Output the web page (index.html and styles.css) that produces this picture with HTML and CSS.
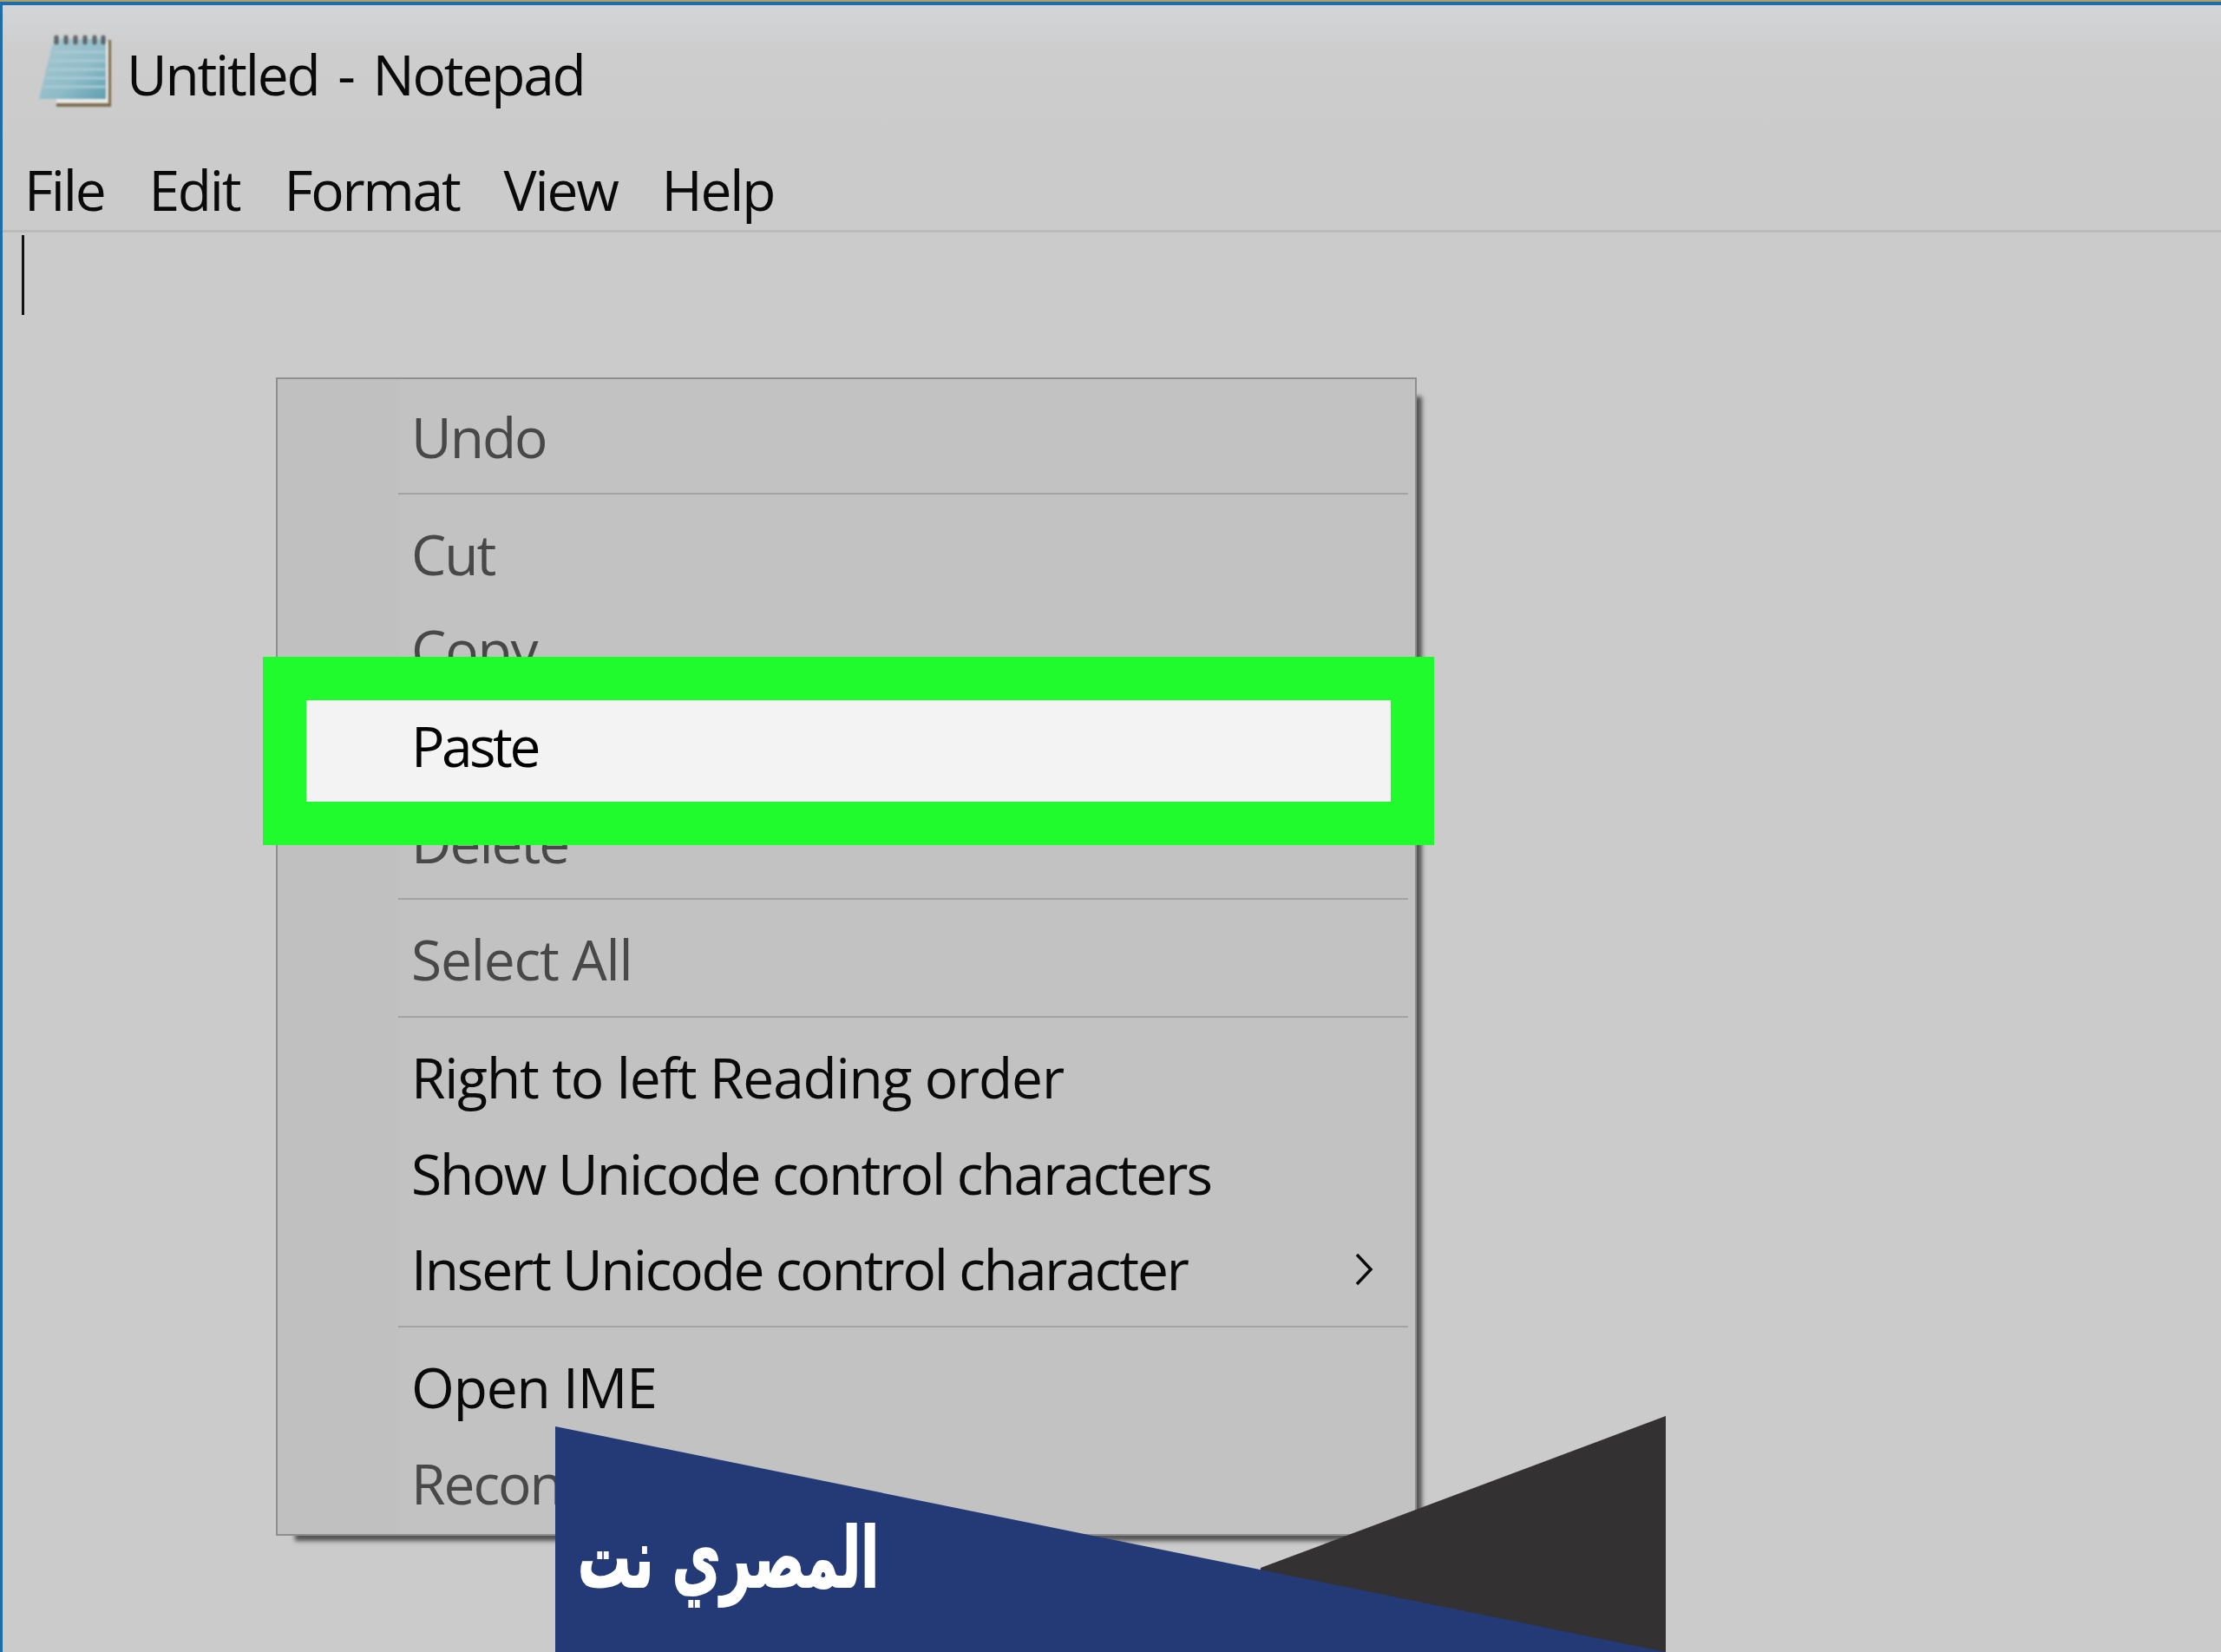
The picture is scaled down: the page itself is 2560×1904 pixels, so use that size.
FILE: index.html
```html
<!DOCTYPE html>
<html lang="en">
<head>
<meta charset="utf-8">
<title>Untitled - Notepad</title>
<link rel="stylesheet" href="styles.css">
</head>
<body>
<div class="window">
  <header class="titlebar">
    <svg class="app-icon" width="84" height="88" viewBox="0 0 84 88" aria-hidden="true">
      <defs>
        <linearGradient id="page" x1="0" y1="0" x2="1" y2="1">
          <stop offset="0" stop-color="#a9c8d2"/>
          <stop offset="0.6" stop-color="#8fbcc8"/>
          <stop offset="1" stop-color="#5f9fb0"/>
        </linearGradient>
      </defs>
      <path d="M20 10H82V85H20Z" fill="#e9e9e6"/>
      <path d="M80 8H83V85H20V81H80Z" fill="#7d6a4c"/>
      <path d="M17 7H77V76H0Q9 40 17 7Z" fill="url(#page)"/>
      <path d="M17 22H76M14 32H76M11 42H76M8 52H76M5 62H76" stroke="#a6cad3" stroke-width="3" fill="none"/>
      <path d="M20 5v6M31 5v6M42 5v6M53 5v6M64 5v6M74 5v6" stroke="#5d6468" stroke-width="5" stroke-linecap="round"/>
    </svg>
    <h1 class="title">Untitled - Notepad</h1>
  </header>
  <nav class="menubar">
    <span class="menu-label">File</span>
    <span class="menu-label">Edit</span>
    <span class="menu-label">Format</span>
    <span class="menu-label">View</span>
    <span class="menu-label">Help</span>
  </nav>
  <main class="editor"><span class="caret"></span></main>
</div>

<div class="context-menu">
  <div class="item off"><span>Undo</span></div>
  <div class="sep first"></div>
  <div class="item off"><span>Cut</span></div>
  <div class="item off loose"><span>Copy</span></div>
  <div class="item hot tight"><span>Paste</span></div>
  <div class="item off"><span>Delete</span></div>
  <div class="sep"></div>
  <div class="item off loose"><span>Select All</span></div>
  <div class="sep"></div>
  <div class="item loose"><span>Right to left Reading order</span></div>
  <div class="item"><span>Show Unicode control characters</span></div>
  <div class="item"><span class="snug">Insert Unicode control character</span>
    <svg class="chevron" width="22" height="38" viewBox="0 0 22 38" aria-hidden="true"><path d="M3 2L19 19L3 36" fill="none" stroke="#0a0a0a" stroke-width="3.5"/></svg>
  </div>
  <div class="sep"></div>
  <div class="item loose"><span>Open IME</span></div>
  <div class="item off"><span>Reconversion</span></div>
</div>

<aside class="banner">
  <svg class="banner-shape" width="1280" height="274" viewBox="0 0 1280 274" aria-hidden="true">
    <polygon points="813,175 1280,0 1280,274 813,274" fill="#343132"/>
    <polygon points="0,12 1280,272 1280,274 0,274" fill="#233a76"/>
  </svg>
  <div class="brand" dir="rtl" lang="ar">المصري نت</div>
</aside>
</body>
</html>
```
FILE: styles.css
```css
* { box-sizing: border-box; }
html, body { margin: 0; height: 100%; }
body {
  position: relative;
  overflow: hidden;
  background: #cbcbcb;
  border-top: 2px solid #a9a264;
  font-family: "Open Sans", "Noto Sans", sans-serif;
  color: #0a0a0a;
}
.window {
  height: 100%;
  display: flex;
  flex-direction: column;
  border-left: 3px solid #1f6cab;
  border-top: 4px solid #1f6cab;
}
.titlebar {
  height: 159px;
  flex: none;
  display: flex;
  align-items: center;
  padding: 0 0 8px 42px;
  gap: 17px;
  background: linear-gradient(#d3d5d8, #cdcdcd 35%, #cbcbcb);
}
.app-icon { flex: none; filter: blur(1.2px); }
.title, .menu-label, .item { font-size: 64px; font-weight: 400; }
.item span, .menu-label, .title { filter: blur(0.5px); }
.title { margin: 9px 0 0; line-height: 1; letter-spacing: -2.2px; word-spacing: 7.5px; }
.menubar {
  height: 103px;
  flex: none;
  display: flex;
  align-items: center;
  gap: 51px;
  padding: 7px 0 0 25px;
  border-bottom: 3px solid #bbbbbb;
}
.menu-label { line-height: 1; letter-spacing: -2.2px; }
.editor { flex: 1; padding: 3px 0 0 22px; }
.caret { display: block; width: 3px; height: 92px; background: #111; }

.context-menu {
  position: absolute;
  left: 318px;
  top: 433px;
  width: 1315px;
  height: 1335px;
  padding-top: 13px;
  border: 2px solid #8e8e8e;
  background: linear-gradient(90deg, #c0c0c0 140px, #c2c2c2 140px);
  box-shadow: 14px 14px 5px -8px #555;
}
.item {
  height: 110.7px;
  display: flex;
  align-items: center;
  padding: 0 0 3px 154px;
  line-height: 1;
  letter-spacing: -2px;
}
.item.loose { letter-spacing: -1.15px; }
.item.tight { letter-spacing: -3.5px; }
.item .snug { letter-spacing: -2.15px; }
.item.off { color: #484848; }
.item.hot { position: relative; z-index: 1; color: #000; }
.item.hot span { position: relative; }
.item.hot::before {
  content: "";
  position: absolute;
  left: 33px;
  width: 1250px;
  top: 1px;
  bottom: -7px;
  background: #f3f3f3;
  box-shadow: 0 0 0 50px #1ffb2c;
}
.sep {
  height: 2px;
  margin: 8px 8px 15px 139px;
  background: #a3a3a3;
}
.sep.first { margin-top: 7px; }
.chevron { position: absolute; left: 1241px; }

.banner {
  position: absolute;
  left: 640px;
  top: 1630px;
  width: 1280px;
  height: 274px;
}
.banner-shape { position: absolute; left: 0; top: 0; }
.brand {
  position: absolute;
  left: 26px;
  top: 92px;
  font-family: "DejaVu Sans", sans-serif;
  font-weight: 700;
  font-size: 96px;
  line-height: 1.5;
  color: #fff;
  -webkit-text-stroke: 2px #fff;
  white-space: nowrap;
  transform: scaleX(0.635);
  transform-origin: left top;
}
```
